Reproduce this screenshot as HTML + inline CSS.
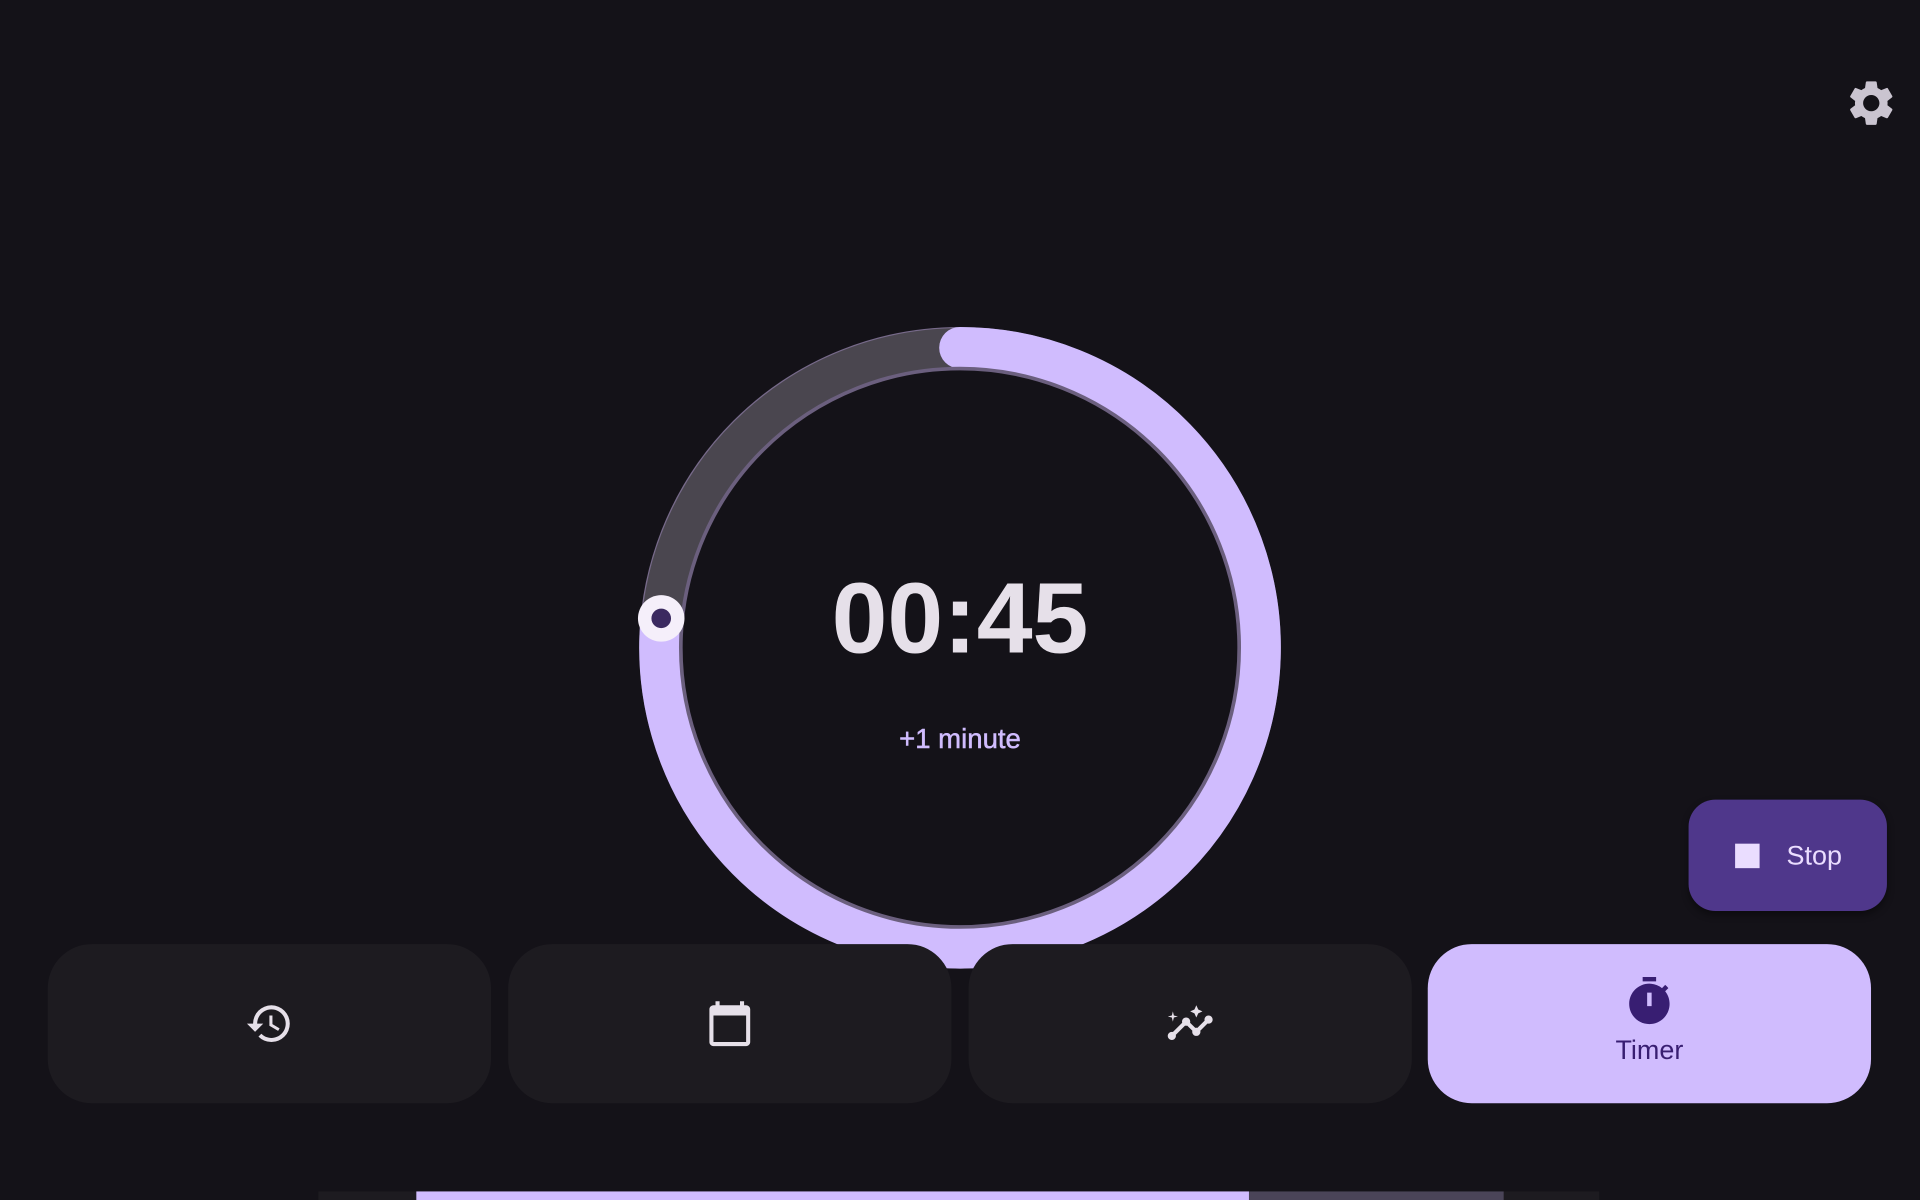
<!DOCTYPE html>
<html><head><meta charset="utf-8"><style>
html,body{margin:0;padding:0;background:#141218;overflow:hidden}
#s{position:absolute;left:0;top:0;width:1568px;height:980px;transform:scale(1.2244898);transform-origin:0 0;font-family:"Liberation Sans",sans-serif}
.card{position:absolute;top:771px;height:130px;width:362px;border-radius:36px;background:#1d1b20;display:flex;align-items:center;justify-content:center}
</style></head><body><div id="s">
<svg width="1568" height="980" style="position:absolute;left:0;top:0">
<circle cx="784" cy="529" r="261" fill="none" stroke="#776a8a" stroke-width="2"/>
<path d="M540.2,505.1 A245,245 0 0 1 784,284" fill="none" stroke="#4a464f" stroke-width="32"/>
<path d="M784,284 A245,245 0 1 1 540.2,505.1" fill="none" stroke="#d0bcfe" stroke-width="34" stroke-linecap="round"/>
<circle cx="784" cy="529" r="228" fill="none" stroke="#6b5f7e" stroke-width="3"/>
<circle cx="540" cy="505" r="19" fill="#f5effa"/>
<circle cx="540" cy="505" r="8" fill="#3b2a60"/>
<path d="M760,770 Q780,775 781,790 L787,790 Q788,775 808,770 Z" fill="#d0bcfe"/>
<g transform="translate(1506,62) scale(1.85)"><path fill="#cac4d0" d="M19.14 12.94c.04-.3.06-.61.06-.94 0-.32-.02-.64-.07-.94l2.03-1.58a.49.49 0 0 0 .12-.61l-1.92-3.32a.488.488 0 0 0-.59-.22l-2.39.96c-.5-.38-1.030-.7-1.62-.94l-.36-2.54a.484.484 0 0 0-.48-.41h-3.84c-.24 0-.43.17-.47.41l-.36 2.54c-.59.24-1.13.57-1.62.94l-2.39-.96c-.22-.08-.47 0-.59.22L2.74 8.87c-.12.21-.08.47.12.61l2.030 1.58c-.05.3-.09.63-.09.94s.02.64.07.94l-2.03 1.58a.49.49 0 0 0-.12.61l1.92 3.32c.12.22.37.29.59.22l2.39-.96c.5.38 1.03.7 1.62.94l.36 2.54c.05.24.24.41.48.41h3.84c.24 0 .44-.17.47-.41l.36-2.54c.59-.24 1.13-.56 1.62-.94l2.39.96c.22.08.47 0 .59-.22l1.92-3.32c.12-.22.07-.47-.12-.61l-2.01-1.58zM12 15.6c-1.980 0-3.6-1.620-3.6-3.6s1.62-3.6 3.6-3.6 3.6 1.62 3.6 3.6-1.62 3.6-3.6 3.6z"/></g>
<rect x="260" y="973" width="1046" height="7" fill="#1d1b20"/>
<rect x="340" y="973" width="680" height="7" fill="#d0bcfe"/>
<rect x="1020" y="973" width="208" height="7" fill="#4a4458"/>
</svg>
<div style="position:absolute;left:584px;width:400px;top:456px;text-align:center;font-size:82px;font-weight:bold;color:#e6e0e9;line-height:100px">00:45</div>
<div style="position:absolute;left:584px;width:400px;top:590px;text-align:center;font-size:22.5px;color:#d0bcfe;line-height:28px;-webkit-text-stroke:0.4px #d0bcfe">+1 minute</div>
<div style="position:absolute;left:1379px;top:653px;width:162px;height:91px;border-radius:22px;background:#4f378b;box-shadow:0 3px 6px rgba(0,0,0,.4)">
<div style="position:absolute;left:38px;top:36px;width:20px;height:20px;background:#eaddff"></div>
<div style="position:absolute;left:80px;top:32px;font-size:22px;color:#eaddff;line-height:28px">Stop</div></div>
<div class="card" style="left:39px"><svg width="40" height="40" viewBox="0 0 24 24"><path fill="#e6e0e9" d="M13 3a9 9 0 0 0-9 9H1l3.89 3.89.07.14L9 12H6c0-3.87 3.13-7 7-7s7 3.13 7 7-3.13 7-7 7c-1.93 0-3.68-.79-4.94-2.06l-1.42 1.42A8.954 8.954 0 0 0 13 21a9 9 0 0 0 0-18zm-1 5v5l4.28 2.540.72-1.21-3.5-2.08V8H12z"/></svg></div>
<div class="card" style="left:415px"><svg width="40" height="40" viewBox="0 0 24 24"><path fill="#e6e0e9" d="M20 3h-1V1h-2v2H7V1H5v2H4c-1.1 0-2 .9-2 2v16c0 1.1.9 2 2 2h16c1.1 0 2-.9 2-2V5c0-1.1-.9-2-2-2zm0 18H4V8h16v13z"/></svg></div>
<div class="card" style="left:791px"><svg width="40" height="40" viewBox="0 0 24 24"><path fill="#e6e0e9" d="M21 8c-1.45 0-2.26 1.44-1.93 2.51l-3.55 3.56c-.3-.09-.74-.09-1.04 0l-2.55-2.55C12.27 10.45 11.46 9 10 9c-1.45 0-2.27 1.44-1.93 2.52l-4.56 4.55C2.44 15.74 1 16.55 1 18c0 1.1.9 2 2 2 1.45 0 2.26-1.44 1.93-2.51l4.55-4.56c.3.09.74.09 1.04 0l2.55 2.55C12.73 16.55 13.54 18 15 18c1.45 0 2.27-1.44 1.930-2.52l3.56-3.55c1.07.33 2.51-.48 2.51-1.93 0-1.1-.9-2-2-2zM15 9l.94-2.07L18 6l-2.06-.93L15 3l-.92 2.07L12 6l2.08.93zM3.5 11L4 9l2-.5L4 8l-.5-2L3 8l-2 .5L3 9z"/></svg></div>
<div class="card" style="left:1166px;background:#d0bcfe;flex-direction:column">
<svg width="44" height="44" viewBox="0 0 24 24" style="margin-top:-4px"><path fill="#381e72" fill-rule="evenodd" d="M15 1H9v2h6V1zm-4 13h2V8h-2v6zm8.03-6.61l1.42-1.42c-.43-.51-.9-.99-1.41-1.41l-1.42 1.42A8.962 8.962 0 0 0 12 4c-4.97 0-9 4.03-9 9s4.02 9 9 9 9-4.03 9-9c0-2.12-.74-4.07-1.97-5.61z"/></svg>
<div style="font-size:22px;color:#381e72;line-height:28px;margin-top:4px">Timer</div></div>
</div></body></html>
